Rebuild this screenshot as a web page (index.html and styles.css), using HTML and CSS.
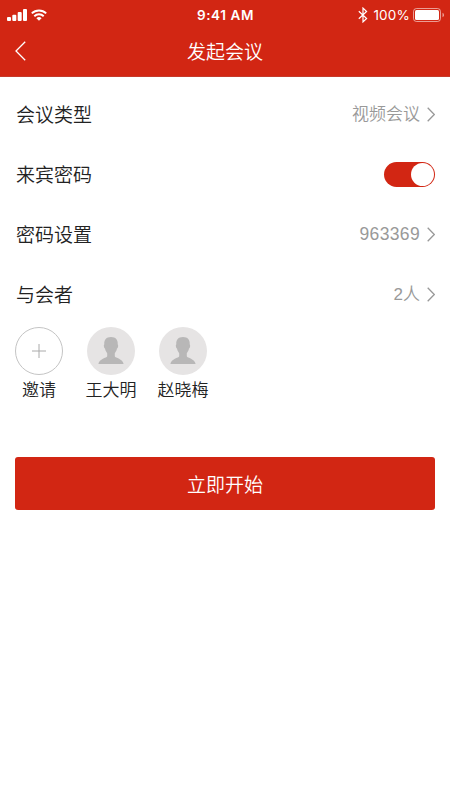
FILE: index.html
```html
<!DOCTYPE html>
<html lang="zh-CN">
<head>
<meta charset="utf-8">
<meta name="viewport" content="width=device-width, initial-scale=1">
<title>发起会议</title>
<link rel="stylesheet" href="styles.css">
</head>
<body>
<header class="header">
  <div class="status">
    <div class="status-left">
      <svg width="20" height="12" viewBox="0 0 20 12" fill="#fff"><rect x="0" y="8" width="4" height="4" rx="1"/><rect x="5.3" y="5.8" width="4" height="6.2" rx="1"/><rect x="10.7" y="3" width="4" height="9" rx="1"/><rect x="16" y="0" width="4" height="12" rx="1"/></svg>
      <svg width="16" height="12" viewBox="0 0 16 12" fill="none" stroke="#fff" stroke-width="1.9"><path d="M.8 4.4a10.3 10.3 0 0 1 14.4 0M3.3 7.2a6.7 6.7 0 0 1 9.4 0"/><path d="M5.4 9.2a3.9 3.9 0 0 1 5.2 0L8 11.8z" fill="#fff" stroke="none"/></svg>
    </div>
    <span class="time">9:41 AM</span>
    <div class="status-right">
      <svg width="10" height="16" viewBox="0 0 10 16" fill="none" stroke="#fff" stroke-width="1.2"><path d="M.8 4.3l7.8 7.2L5 14.9V1.1l3.6 3.4L.8 11.7"/></svg>
      <span class="percent">100%</span>
      <svg width="31" height="14" viewBox="0 0 31 14"><rect x=".5" y=".5" width="27" height="13" rx="3" fill="none" stroke="#fff" stroke-opacity=".55"/><rect x="2" y="2" width="24" height="10" rx="1.5" fill="#fff"/><path d="M29.5 4.7a2.5 2.5 0 0 1 0 4.6z" fill="#fff" fill-opacity=".55"/></svg>
    </div>
  </div>
  <div class="nav">
    <svg class="back" width="12" height="20" viewBox="0 0 12 20" fill="none" stroke="#fff" stroke-width="1.3"><path d="M10.2 .8L1 10l9.2 9.2"/></svg>
    <h1 class="title">发起会议</h1>
  </div>
</header>
<main class="content">
  <div class="row"><span class="label">会议类型</span><span class="value"><span class="text">视频会议</span><svg class="chevron" viewBox="0 0 8 15"><path d="M.7 .7l6.6 6.8-6.6 6.8"/></svg></span></div>
  <div class="row"><span class="label">来宾密码</span><span class="switch"><span class="knob"></span></span></div>
  <div class="row"><span class="label">密码设置</span><span class="value"><span class="number">963369</span><svg class="chevron" viewBox="0 0 8 15"><path d="M.7 .7l6.6 6.8-6.6 6.8"/></svg></span></div>
  <div class="row"><span class="label">与会者</span><span class="value"><span class="text">2人</span><svg class="chevron" viewBox="0 0 8 15"><path d="M.7 .7l6.6 6.8-6.6 6.8"/></svg></span></div>
  <div class="people">
    <div class="person"><svg class="avatar" viewBox="0 0 48 48" fill="none"><circle cx="24" cy="24" r="23.5" stroke="#c4c4c4"/><path d="M17 24h14M24 17v14" stroke="#aaa"/></svg><span>邀请</span></div>
    <div class="person"><svg class="avatar" viewBox="0 0 48 48"><circle cx="24" cy="24" r="24" fill="#e6e4e4"/><path d="M24 10c-4.7 0-7 2.8-6.7 7 0 1-.7.8-.4 2.5.2 1.4.7 1.8 1.1 2 .5 2.5 1.4 3.6 2.2 4.7v3c-.5 1.8-8 2.5-8.8 7.8h25.200c-.8-5.3-8.3-6-8.8-7.800v-3c.8-1.100 1.700-2.200 2.200-4.700.4-.2.9-.6 1.100-2 .3-1.700-.4-1.500-.4-2.500.3-4.200-2-7-6.700-7z" fill="#b8b7b7"/></svg><span>王大明</span></div>
    <div class="person"><svg class="avatar" viewBox="0 0 48 48"><circle cx="24" cy="24" r="24" fill="#e6e4e4"/><path d="M24 10c-4.700 0-7 2.800-6.700 7 0 1-.7.8-.4 2.500.2 1.400.7 1.800 1.100 2 .5 2.500 1.400 3.600 2.200 4.700v3c-.5 1.800-8 2.500-8.800 7.800h25.200c-.8-5.300-8.300-6-8.800-7.800v-3c.8-1.100 1.700-2.200 2.200-4.700.4-.2.900-.6 1.100-2 .3-1.700-.4-1.500-.4-2.500.3-4.200-2-7-6.700-7z" fill="#b8b7b7"/></svg><span>赵晓梅</span></div>
  </div>
  <button class="start">立即开始</button>
</main>
</body>
</html>
```
FILE: styles.css
```css
* { box-sizing: border-box; }
body {
  margin: 0;
  min-height: 800px;
  background: #fff;
  color: #222;
  font-family: "Liberation Sans", "Noto Sans CJK SC", sans-serif;
  font-weight: 350;
}
svg { display: block; flex: none; }
.header {
  height: 77px;
  background: #d22613;
  color: #fff;
  border-bottom: 1px solid #c63a2b;
}
.status {
  height: 30px;
  padding: 0 6px 0 7px;
  display: grid;
  grid-template-columns: 1fr auto 1fr;
  align-items: center;
}
.status-left { display: flex; align-items: center; gap: 4px; padding-bottom: 1px; }
.status-right { display: flex; align-items: center; justify-content: flex-end; }
.time { font: 600 13.5px/30px Inter, sans-serif; letter-spacing: .6px; }
.percent { font: 400 13.5px/30px Inter, sans-serif; margin: 0 3px 0 5px; letter-spacing: .2px; }
.nav {
  height: 42px;
  padding: 0 15px;
  display: grid;
  grid-template-columns: 1fr auto 1fr;
  align-items: center;
}
.title {
  margin: 0;
  font: 350 19px/42px "Noto Sans CJK SC", sans-serif;
}
.content { padding: 7px 15px 0; }
.row {
  height: 60px;
  display: flex;
  align-items: center;
  justify-content: space-between;
  font-size: 19px;
}
.label { padding: 0 0 2px 1px; }
.value { display: flex; align-items: center; font-size: 17px; color: #999; }
.text { padding-bottom: 3px; }
.number { font-size: 17.5px; letter-spacing: .35px; }
.chevron {
  width: 8px;
  height: 15px;
  margin-left: 7px;
  fill: none;
  stroke: #999;
  stroke-width: 1.3;
}
.switch {
  width: 51px;
  height: 25px;
  border-radius: 13px;
  background: #d22613;
  display: flex;
  justify-content: flex-end;
  padding: 1px;
}
.knob { width: 23px; height: 23px; border-radius: 50%; background: #fff; }
.people { display: flex; margin: 3px 0 0 -3px; gap: 18px; }
.person {
  width: 54px;
  display: flex;
  flex-direction: column;
  align-items: center;
  font-size: 17px;
  line-height: 32px;
  white-space: nowrap;
}
.avatar { width: 48px; height: 48px; }
.start {
  display: block;
  width: 100%;
  height: 53px;
  margin-top: 50px;
  padding: 0;
  border: 0;
  border-radius: 3px;
  background: #d22613;
  color: #fff;
  font: 350 19px/53px "Noto Sans CJK SC", sans-serif;
}
```
